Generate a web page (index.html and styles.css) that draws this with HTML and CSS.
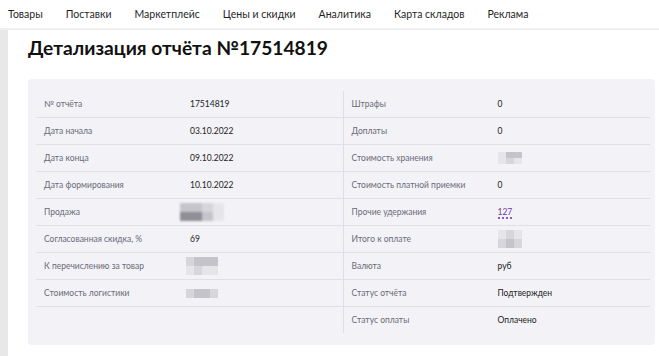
FILE: index.html
```html
<!DOCTYPE html>
<html lang="ru">
<head>
  <meta charset="UTF-8">
  <title>Детализация отчёта №17514819</title>
  <link rel="stylesheet" href="styles.css">
</head>
<body>

  <header class="topnav">
    <a href="#">Товары</a>
    <a href="#">Поставки</a>
    <a href="#">Маркетплейс</a>
    <a href="#">Цены и скидки</a>
    <a href="#">Аналитика</a>
    <a href="#">Карта складов</a>
    <a href="#">Реклама</a>
  </header>

  <div class="page">
    <aside class="side"></aside>

    <main class="content">
      <h1>Детализация отчёта №17514819</h1>

      <section class="report">
        <!-- левая колонка -->
        <div class="col">
          <div class="row"><span class="label">№ отчёта</span><span class="value">17514819</span></div>
          <div class="row"><span class="label">Дата начала</span><span class="value">03.10.2022</span></div>
          <div class="row"><span class="label">Дата конца</span><span class="value">09.10.2022</span></div>
          <div class="row"><span class="label">Дата формирования</span><span class="value">10.10.2022</span></div>
          <div class="row">
            <span class="label">Продажа</span>
            <span class="value"><span class="mosaic m-sale"><i class="c2"></i><i class="c2"></i><i class="c1"></i><i class="c0"></i><i class="c3"></i><i class="c3"></i><i class="c2"></i><i class="c0"></i></span></span>
          </div>
          <div class="row"><span class="label">Согласованная скидка, %</span><span class="value">69</span></div>
          <div class="row">
            <span class="label">К перечислению за товар</span>
            <span class="value shift"><span class="mosaic m-pay"><i class="c1"></i><i class="c2"></i><i class="c2"></i><i class="c2"></i><i class="c0"></i><i class="c1"></i><i class="c0"></i><i class="c0"></i></span></span>
          </div>
          <div class="row">
            <span class="label">Стоимость логистики</span>
            <span class="value shift"><span class="mosaic m-log"><i class="c1"></i><i class="c2"></i><i class="c2"></i><i class="c1"></i></span></span>
          </div>
        </div>

        <!-- правая колонка -->
        <div class="col col-right">
          <div class="row"><span class="label">Штрафы</span><span class="value">0</span></div>
          <div class="row"><span class="label">Доплаты</span><span class="value">0</span></div>
          <div class="row">
            <span class="label">Стоимость хранения</span>
            <span class="value"><span class="mosaic m-store"><i class="c0"></i><i class="c2"></i><i class="c2"></i><i class="c0"></i><i class="c1"></i><i class="c0"></i></span></span>
          </div>
          <div class="row"><span class="label">Стоимость платной приемки</span><span class="value">0</span></div>
          <div class="row"><span class="label">Прочие удержания</span><span class="value"><a class="link" href="#">127</a></span></div>
          <div class="row">
            <span class="label">Итого к оплате</span>
            <span class="value"><span class="mosaic m-total"><i class="c0"></i><i class="c1"></i><i class="c0"></i><i class="c1"></i><i class="c2"></i><i class="c1"></i></span></span>
          </div>
          <div class="row"><span class="label">Валюта</span><span class="value">руб</span></div>
          <div class="row"><span class="label">Статус отчёта</span><span class="value">Подтвержден</span></div>
          <div class="row"><span class="label">Статус оплаты</span><span class="value">Оплачено</span></div>
        </div>
      </section>
    </main>
  </div>

</body>
</html>
```

FILE: styles.css
```css
body {
  margin: 0;
  background: #fff;
  font-family: Lato, "Noto Sans", sans-serif;
  color: #222;
}

.topnav {
  display: flex;
  gap: 23px;
  height: 28px;
  align-items: center;
  padding: 0 0 0 8px;
  border-bottom: 2px solid #efeff1;
  font-size: 10.5px;
}
.topnav a {
  color: #1f1f1f;
  text-decoration: none;
}

.page {
  display: flex;
}
.side {
  width: 8px;
  background: #e8e8e8;
  flex: none;
  min-height: 326px;
}
.content {
  flex: 1;
  padding: 0 4px 0 20px;
}

h1 {
  margin: 6px 0 19px;
  font-size: 19.2px;
  line-height: 24px;
  font-weight: 700;
  color: #111;
}

.report {
  display: flex;
  background: #f3f3f7;
  border-radius: 4px;
  padding: 12px 5px 12px 8px;
}
.col {
  flex: 1;
}
.col-right {
  border-left: 1px solid #dedee4;
}
.col-right .row:last-child {
  border-bottom: none;
}

.row {
  display: flex;
  align-items: center;
  height: 26px;
  border-bottom: 1px solid #e0e0e6;
  font-size: 8.5px;
  padding-left: 8px;
}
.label {
  width: 146px;
  flex: none;
  color: #6a6a78;
}
.value {
  color: #222;
}
.value.shift {
  margin-left: -4px;
}

.link {
  color: #6f3aa8;
  text-decoration: none;
  border-bottom: 2px dotted #8a5cc0;
}

/* размытые суммы */
.mosaic {
  display: inline-flex;
  flex-wrap: wrap;
  vertical-align: middle;
}
.mosaic i {
  display: block;
}
.c0 { background: #e6e6ea; }
.c1 { background: #d6d6db; }
.c2 { background: #c4c4ca; }
.c3 { background: #8f8f96; }

.m-sale { width: 44px; margin-left: -10px; filter: blur(1px); }
.m-sale i { width: 11px; height: 9px; }
.m-pay { width: 33px; }
.m-pay i { width: 8px; height: 9px; }
.m-log { width: 33px; }
.m-log i { width: 8px; height: 9px; }
.m-store { width: 25px; }
.m-store i { width: 8px; height: 6px; }
.m-total { width: 25px; }
.m-total i { width: 8px; height: 9px; }
```
